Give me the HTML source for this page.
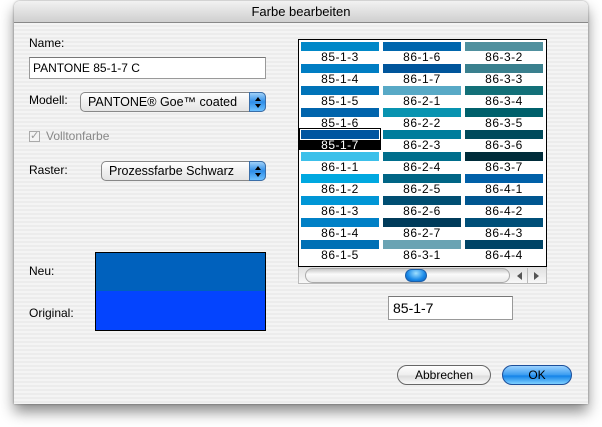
<!DOCTYPE html>
<html><head><meta charset="utf-8"><style>
*{margin:0;padding:0;box-sizing:border-box}
body{width:602px;height:427px;background:#fff;position:relative;overflow:hidden;font-family:"Liberation Sans",sans-serif;font-size:12px;color:#000}
.a{position:absolute}
#win{left:14px;top:1px;width:574px;height:403px;border-radius:6px 6px 0 0;background:repeating-linear-gradient(#ececec 0 2px,#f4f4f4 2px 4px);box-shadow:0 8px 14px rgba(0,0,0,.45),0 0 2px rgba(0,0,0,.4);overflow:hidden}
#tb{left:0;top:0;width:574px;height:22px;background:linear-gradient(#f2f2f2,#cfcfcf);border-bottom:1px solid #888;text-align:center;font-size:13px;line-height:22px}
.lbl{font-size:12px}
.fld{background:#fff;border:1px solid #999;border-top-color:#777}
.pop{border:1px solid #888;border-radius:5px;background:linear-gradient(#fff,#f0f0f0 50%,#e4e4e4);padding-left:21px;line-height:18px;font-size:12.5px}
.pop i{position:absolute;right:-1px;top:-1px;width:17px;height:20px;border-radius:0 5px 5px 0;background:linear-gradient(#9ed0f8,#2f8ee8 50%,#6cc0ff);border:1px solid #3a6ea8}
.pop i:before{content:"";position:absolute;left:5px;top:4px;border:3px solid transparent;border-bottom:4px solid #000;border-top:0}
.pop i:after{content:"";position:absolute;left:5px;top:11px;border:3px solid transparent;border-top:4px solid #000;border-bottom:0}
#grid{left:284px;top:38px;width:249px;height:228px;background:#fff;border:1px solid #000}
.c{position:absolute;width:78px;height:22px}
.c b{display:block;margin:2px 0 0 2px;height:9px;width:78px}
.c span{display:block;text-align:center;font-size:12px;line-height:11px;margin-top:1px;width:82px;letter-spacing:.5px}
.btn{border:1px solid #666;border-radius:10px;text-align:center;line-height:18px;font-size:12px}
</style></head><body>
<div id="win" class="a">
<div id="tb" class="a">Farbe bearbeiten</div>
<div class="a lbl" style="left:15px;top:35px">Name:</div>
<div class="a fld" style="left:15px;top:56px;width:237px;height:22px;padding:3px 3px;font-size:12px">PANTONE 85-1-7 C</div>
<div class="a lbl" style="left:15px;top:92px">Modell:</div>
<div class="a pop" style="left:66px;top:91px;width:186px;height:20px;padding-left:7px">PANTONE® Goe™ coated<i></i></div>
<div class="a" style="left:15px;top:130px;width:11px;height:11px;border:1px solid #aaa;background:#f4f4f4;color:#999;font-size:11px;line-height:9px">✓</div>
<div class="a lbl" style="left:32px;top:128px;color:#888">Volltonfarbe</div>
<div class="a lbl" style="left:15px;top:162px">Raster:</div>
<div class="a pop" style="left:87px;top:160px;width:165px;height:20px;padding-left:7px">Prozessfarbe Schwarz<i></i></div>
<div class="a lbl" style="left:15px;top:263px">Neu:</div>
<div class="a lbl" style="left:15px;top:305px">Original:</div>
<div class="a" style="left:81px;top:251px;width:171px;height:79px;border:1px solid #000;background:#0061bd"><div style="position:absolute;left:0;top:38px;width:169px;height:39px;background:#0444fe"></div></div>
<div id="grid" class="a">
<div class="c" style="left:0;top:0"><b style="background:#0088c8"></b><span>85-1-3</span></div>
<div class="c" style="left:0;top:22px"><b style="background:#007dc3"></b><span>85-1-4</span></div>
<div class="c" style="left:0;top:44px"><b style="background:#0073b8"></b><span>85-1-5</span></div>
<div class="c" style="left:0;top:66px"><b style="background:#0064ac"></b><span>85-1-6</span></div>
<div class="c" style="left:0;top:88px;background:#000;width:82px"><b style="background:#0055a0;outline:1px solid #fff;margin-top:2px"></b><span style="color:#fff">85-1-7</span></div>
<div class="c" style="left:0;top:110px"><b style="background:#3cc0ea"></b><span>86-1-1</span></div>
<div class="c" style="left:0;top:132px"><b style="background:#00a8e0"></b><span>86-1-2</span></div>
<div class="c" style="left:0;top:154px"><b style="background:#0096d6"></b><span>86-1-3</span></div>
<div class="c" style="left:0;top:176px"><b style="background:#0080c6"></b><span>86-1-4</span></div>
<div class="c" style="left:0;top:198px"><b style="background:#0070b5"></b><span>86-1-5</span></div>
<div class="c" style="left:82px;top:0"><b style="background:#0066ad"></b><span>86-1-6</span></div>
<div class="c" style="left:82px;top:22px"><b style="background:#00559b"></b><span>86-1-7</span></div>
<div class="c" style="left:82px;top:44px"><b style="background:#58a9c6"></b><span>86-2-1</span></div>
<div class="c" style="left:82px;top:66px"><b style="background:#0893b0"></b><span>86-2-2</span></div>
<div class="c" style="left:82px;top:88px"><b style="background:#007d9c"></b><span>86-2-3</span></div>
<div class="c" style="left:82px;top:110px"><b style="background:#006e8c"></b><span>86-2-4</span></div>
<div class="c" style="left:82px;top:132px"><b style="background:#006585"></b><span>86-2-5</span></div>
<div class="c" style="left:82px;top:154px"><b style="background:#004e72"></b><span>86-2-6</span></div>
<div class="c" style="left:82px;top:176px"><b style="background:#003b5a"></b><span>86-2-7</span></div>
<div class="c" style="left:82px;top:198px"><b style="background:#6aa3b3"></b><span>86-3-1</span></div>
<div class="c" style="left:164px;top:0"><b style="background:#50909e"></b><span>86-3-2</span></div>
<div class="c" style="left:164px;top:22px"><b style="background:#3a808e"></b><span>86-3-3</span></div>
<div class="c" style="left:164px;top:44px"><b style="background:#137078"></b><span>86-3-4</span></div>
<div class="c" style="left:164px;top:66px"><b style="background:#00606b"></b><span>86-3-5</span></div>
<div class="c" style="left:164px;top:88px"><b style="background:#004a5b"></b><span>86-3-6</span></div>
<div class="c" style="left:164px;top:110px"><b style="background:#002c3a"></b><span>86-3-7</span></div>
<div class="c" style="left:164px;top:132px"><b style="background:#0060a8"></b><span>86-4-1</span></div>
<div class="c" style="left:164px;top:154px"><b style="background:#005690"></b><span>86-4-2</span></div>
<div class="c" style="left:164px;top:176px"><b style="background:#004f78"></b><span>86-4-3</span></div>
<div class="c" style="left:164px;top:198px"><b style="background:#004466"></b><span>86-4-4</span></div>
</div>
<div class="a" style="left:284px;top:266px;width:249px;height:17px;background:linear-gradient(#e0e0e0,#f8f8f8);border:1px solid #bbb;border-top:0"></div>
<div class="a" style="left:291px;top:267px;width:205px;height:15px;border-radius:8px;background:linear-gradient(#c8c8c8,#fafafa 40%,#e8e8e8);border:1px solid #aaa"></div>
<div class="a" style="left:391px;top:268px;width:22px;height:13px;border-radius:7px;background:radial-gradient(ellipse at 50% 30%,#9fe0ff,#1a8ae8 60%,#0a5ab8);border:1px solid #1d5fa8"></div>
<div class="a" style="left:513px;top:267px;width:1px;height:16px;background:#bbb"></div>
<div class="a" style="left:503px;top:271px;width:0;height:0;border:4px solid transparent;border-right:5px solid #555;border-left:0"></div>
<div class="a" style="left:520px;top:271px;width:0;height:0;border:4px solid transparent;border-left:5px solid #555;border-right:0"></div>
<div class="a fld" style="left:374px;top:295px;width:125px;height:24px;padding:3px 4px;font-size:14px">85-1-7</div>
<div class="a btn" style="left:383px;top:364px;width:94px;height:20px;background:linear-gradient(#fff,#eee 50%,#ddd 55%,#f8f8f8)">Abbrechen</div>
<div class="a btn" style="left:488px;top:364px;width:70px;height:20px;border-color:#1d4f9a;background:linear-gradient(#9bd2ff,#3a9cf0 50%,#1282e8 55%,#7fd0ff)">OK</div>
</div>
</body></html>
